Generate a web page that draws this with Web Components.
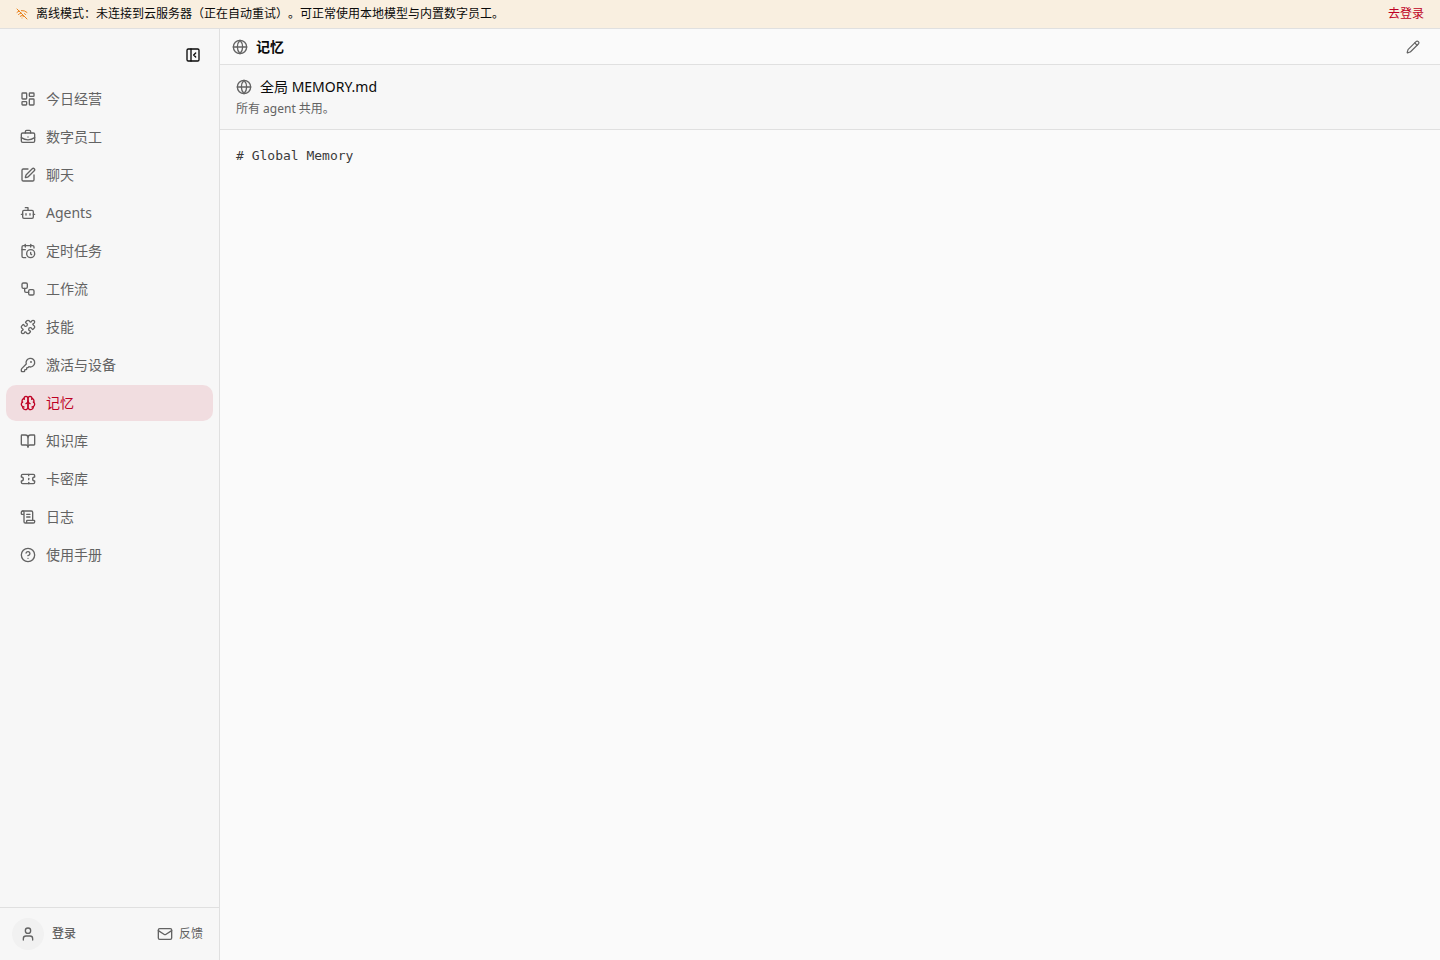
<!DOCTYPE html>
<html lang="zh-CN">
<head>
<meta charset="utf-8">
<meta name="viewport" content="width=device-width, initial-scale=1">
<title>记忆</title>
<style>
    :root {
        --bg: #fafafa;
        --bg-side: #f7f7f7;
        --bg-warn: #f9efe0;
        --border: #e0e0e0;
        --text: #0a0a0a;
        --muted: #636363;
        --accent: #be0024;
        --accent-soft: #f1dde0;
        --warn: #e8811c;
        --mono: "DejaVu Sans Mono", "Noto Sans CJK SC", monospace;
    }

    body {
        margin: 0;
        color: var(--text);
        font: 14px/20px "Noto Sans", "Noto Sans CJK SC", sans-serif;
        text-spacing-trim: space-all;
    }
</style>
</head>
<body>
<app-shell>
    <offline-banner slot="banner" action="去登录">离线模式：未连接到云服务器（正在自动重试）。可正常使用本地模型与内置数字员工。</offline-banner>

    <side-bar slot="sidebar">
        <nav-item icon="dashboard">今日经营</nav-item>
        <nav-item icon="briefcase">数字员工</nav-item>
        <nav-item icon="compose">聊天</nav-item>
        <nav-item icon="bot">Agents</nav-item>
        <nav-item icon="calendar">定时任务</nav-item>
        <nav-item icon="workflow">工作流</nav-item>
        <nav-item icon="puzzle">技能</nav-item>
        <nav-item icon="key">激活与设备</nav-item>
        <nav-item icon="brain" active>记忆</nav-item>
        <nav-item icon="book">知识库</nav-item>
        <nav-item icon="ticket">卡密库</nav-item>
        <nav-item icon="scroll">日志</nav-item>
        <nav-item icon="help">使用手册</nav-item>
        <user-bar slot="footer"></user-bar>
    </side-bar>

    <memory-page>
        <span slot="heading">记忆</span>
        <span slot="file">全局 MEMORY.md</span>
        <span slot="note">所有 agent 共用。</span>
        # Global Memory
    </memory-page>
</app-shell>

<script>
const ICONS = {
    dashboard: `<rect width="7" height="9" x="3" y="3" rx="1"/><rect width="7" height="5" x="14" y="3" rx="1"/><rect width="7" height="9" x="14" y="12" rx="1"/><rect width="7" height="5" x="3" y="16" rx="1"/>`,
    briefcase: `<path d="M12 12h.01"/><path d="M16 6V4a2 2 0 0 0-2-2h-4a2 2 0 0 0-2 2v2"/><path d="M22 13a18.15 18.15 0 0 1-20 0"/><rect width="20" height="14" x="2" y="6" rx="2"/>`,
    compose: `<path d="M12 3H5a2 2 0 0 0-2 2v14a2 2 0 0 0 2 2h14a2 2 0 0 0 2-2v-7"/><path d="M18.375 2.625a1 1 0 0 1 3 3l-9.013 9.014a2 2 0 0 1-.853.505l-2.873.84a.5.5 0 0 1-.62-.62l.84-2.873a2 2 0 0 1 .506-.852z"/>`,
    bot: `<path d="M12 8V4H8"/><rect width="16" height="12" x="4" y="8" rx="2"/><path d="M2 14h2"/><path d="M20 14h2"/><path d="M15 13v2"/><path d="M9 13v2"/>`,
    calendar: `<path d="M21 7.5V6a2 2 0 0 0-2-2H5a2 2 0 0 0-2 2v14a2 2 0 0 0 2 2h3.5"/><path d="M16 2v4"/><path d="M8 2v4"/><path d="M3 10h5"/><path d="M17.5 17.5 16 16.3V14"/><circle cx="16" cy="16" r="6"/>`,
    workflow: `<rect width="8" height="8" x="3" y="3" rx="2"/><path d="M7 11v4a2 2 0 0 0 2 2h4"/><rect width="8" height="8" x="13" y="13" rx="2"/>`,
    puzzle: `<path d="M15.39 4.39a1 1 0 0 0 1.68-.474 2.5 2.5 0 1 1 3.014 3.015 1 1 0 0 0-.474 1.68l1.683 1.682a2.414 2.414 0 0 1 0 3.414L19.61 15.39a1 1 0 0 1-1.68-.474 2.5 2.5 0 1 0-3.014 3.015 1 1 0 0 1 .474 1.68l-1.683 1.682a2.414 2.414 0 0 1-3.414 0L8.61 19.61a1 1 0 0 0-1.68.474 2.5 2.5 0 1 1-3.014-3.015 1 1 0 0 0 .474-1.68l-1.683-1.682a2.414 2.414 0 0 1 0-3.414L4.39 8.61a1 1 0 0 1 1.68.474 2.5 2.5 0 1 0 3.014-3.015 1 1 0 0 1-.474-1.68l1.683-1.682a2.414 2.414 0 0 1 3.414 0z"/>`,
    key: `<path d="M2.586 17.414A2 2 0 0 0 2 18.828V21a1 1 0 0 0 1 1h3a1 1 0 0 0 1-1v-1a1 1 0 0 1 1-1h1a1 1 0 0 0 1-1v-1a1 1 0 0 1 1-1h.172a2 2 0 0 0 1.414-.586l.814-.814a6.5 6.5 0 1 0-4-4z"/><circle cx="16.5" cy="7.5" r=".5" fill="currentColor"/>`,
    brain: `<path d="M12 5a3 3 0 1 0-5.997.125 4 4 0 0 0-2.526 5.77 4 4 0 0 0 .556 6.588A4 4 0 1 0 12 18Z"/><path d="M12 5a3 3 0 1 1 5.997.125 4 4 0 0 1 2.526 5.77 4 4 0 0 1-.556 6.588A4 4 0 1 1 12 18Z"/><path d="M15 13a4.5 4.5 0 0 1-3-4 4.5 4.5 0 0 1-3 4"/><path d="M17.599 6.5a3 3 0 0 0 .399-1.375"/><path d="M6.003 5.125A3 3 0 0 0 6.401 6.5"/><path d="M3.477 10.896a4 4 0 0 1 .585-.396"/><path d="M19.938 10.5a4 4 0 0 1 .585.396"/><path d="M6 18a4 4 0 0 1-1.967-.516"/><path d="M19.967 17.484A4 4 0 0 1 18 18"/>`,
    book: `<path d="M12 7v14"/><path d="M3 18a1 1 0 0 1-1-1V4a1 1 0 0 1 1-1h5a4 4 0 0 1 4 4 4 4 0 0 1 4-4h5a1 1 0 0 1 1 1v13a1 1 0 0 1-1 1h-6a3 3 0 0 0-3 3 3 3 0 0 0-3-3z"/>`,
    ticket: `<path d="M2 9a3 3 0 0 1 0 6v2a2 2 0 0 0 2 2h16a2 2 0 0 0 2-2v-2a3 3 0 0 1 0-6V7a2 2 0 0 0-2-2H4a2 2 0 0 0-2 2Z"/><path d="M13 5v2"/><path d="M13 17v2"/><path d="M13 11v2"/>`,
    scroll: `<path d="M15 12h-5"/><path d="M15 8h-5"/><path d="M19 17V5a2 2 0 0 0-2-2H4"/><path d="M8 21h12a2 2 0 0 0 2-2v-1a1 1 0 0 0-1-1H11a1 1 0 0 0-1 1v1a2 2 0 1 1-4 0V5a2 2 0 1 0-4 0v2a1 1 0 0 0 1 1h3"/>`,
    help: `<circle cx="12" cy="12" r="10"/><path d="M9.09 9a3 3 0 0 1 5.83 1c0 2-3 3-3 3"/><path d="M12 17h.01"/>`,
    user: `<path d="M19 21v-2a4 4 0 0 0-4-4H9a4 4 0 0 0-4 4v2"/><circle cx="12" cy="7" r="4"/>`,
    mail: `<rect width="20" height="16" x="2" y="4" rx="2"/><path d="m22 7-8.97 5.7a1.94 1.94 0 0 1-2.06 0L2 7"/>`,
    globe: `<circle cx="12" cy="12" r="10"/><path d="M12 2a14.5 14.5 0 0 0 0 20 14.5 14.5 0 0 0 0-20"/><path d="M2 12h20"/>`,
    pencil: `<path d="M21.174 6.812a1 1 0 0 0-3.986-3.987L3.842 16.174a2 2 0 0 0-.5.83l-1.321 4.352a.5.5 0 0 0 .623.622l4.353-1.32a2 2 0 0 0 .83-.497z"/><path d="m15 5 4 4"/>`,
    offline: `<path d="M12 20h.01"/><path d="M8.5 16.429a5 5 0 0 1 7 0"/><path d="M5 12.859a10 10 0 0 1 5.17-2.69"/><path d="M19 12.859a10 10 0 0 0-2.007-1.523"/><path d="M2 8.82a15 15 0 0 1 4.177-2.643"/><path d="M22 8.82a15 15 0 0 0-11.288-3.764"/><path d="m2 2 20 20"/>`,
    collapse: `<rect width="18" height="18" x="3" y="3" rx="2"/><path d="M9 3v18"/><path d="m16 15-3-3 3-3"/>`
};

class BaseElement extends HTMLElement {
    constructor() {
        super();
        this.attachShadow({mode: "open"});
    }

    static get reset() {
        return /* css */`
            * { box-sizing: border-box; }

            button {
                display: flex;
                align-items: center;
                margin: 0;
                padding: 0;
                border: 0;
                background: none;
                color: inherit;
                font: inherit;
                cursor: pointer;
            }
        `;
    }

    connectedCallback() {
        this.shadowRoot.innerHTML = /* html */`
            <style>${BaseElement.reset}${this.constructor.styles}</style>
            ${this.template()}
        `;
    }
}

class AppIcon extends BaseElement {
    static get styles() {
        return /* css */`
            :host {
                display: block;
                flex: none;
                width: var(--icon-size, 16px);
                height: var(--icon-size, 16px);
            }

            svg {
                display: block;
                width: 100%;
                height: 100%;
            }
        `;
    }

    template() {
        return /* html */`
            <svg viewBox="0 0 24 24" fill="none" stroke="currentColor" stroke-width="2"
                stroke-linecap="round" stroke-linejoin="round" aria-hidden="true">${ICONS[this.getAttribute("name")]}</svg>
        `;
    }
}

class AppShell extends BaseElement {
    static get styles() {
        return /* css */`
            :host {
                display: flex;
                flex-direction: column;
                min-height: 100vh;
                background: var(--bg);
            }

            .columns {
                display: flex;
                flex: 1;
            }
        `;
    }

    template() {
        return /* html */`
            <slot name="banner"></slot>
            <div class="columns">
                <slot name="sidebar"></slot>
                <slot></slot>
            </div>
        `;
    }
}

class OfflineBanner extends BaseElement {
    static get styles() {
        return /* css */`
            :host {
                display: flex;
                align-items: center;
                gap: 8px;
                padding: 6px 16px;
                border-bottom: 1px solid var(--border);
                background: var(--bg-warn);
                font-size: 12px;
                line-height: 16px;
            }

            app-icon {
                --icon-size: 12px;
                color: var(--warn);
            }

            .message { flex: 1; }

            a {
                color: var(--accent);
                text-decoration: none;
            }
        `;
    }

    template() {
        return /* html */`
            <app-icon name="offline"></app-icon>
            <span class="message"><slot></slot></span>
            <a href="#login">${this.getAttribute("action")}</a>
        `;
    }
}

class SideBar extends BaseElement {
    static get styles() {
        return /* css */`
            :host {
                display: flex;
                flex: none;
                flex-direction: column;
                box-sizing: border-box;
                width: 220px;
                border-right: 1px solid var(--border);
                background: var(--bg-side);
            }

            .top {
                display: flex;
                justify-content: flex-end;
                padding: 12px;
            }

            .top button { padding: 6px; }

            nav {
                display: flex;
                flex: 1;
                flex-direction: column;
                gap: 2px;
                padding: 0 6px;
            }
        `;
    }

    template() {
        return /* html */`
            <div class="top">
                <button type="button" aria-label="收起侧边栏"><app-icon name="collapse"></app-icon></button>
            </div>
            <nav><slot></slot></nav>
            <slot name="footer"></slot>
        `;
    }
}

class NavItem extends BaseElement {
    static get styles() {
        return /* css */`
            :host {
                display: block;
                color: var(--muted);
            }

            :host([active]) { color: var(--accent); }

            a {
                display: flex;
                align-items: center;
                gap: 10px;
                padding: 8px 14px;
                border-radius: 10px;
                color: inherit;
                text-decoration: none;
            }

            :host([active]) a { background: var(--accent-soft); }
        `;
    }

    template() {
        const icon = this.getAttribute("icon");
        return /* html */`
            <a href="#${icon}"><app-icon name="${icon}"></app-icon><slot></slot></a>
        `;
    }
}

class UserBar extends BaseElement {
    static get styles() {
        return /* css */`
            :host {
                display: flex;
                align-items: center;
                justify-content: space-between;
                padding: 10px 16px 10px 12px;
                border-top: 1px solid var(--border);
                color: var(--muted);
                font-size: 12px;
                line-height: 16px;
            }

            .login {
                gap: 8px;
                font-weight: 500;
            }

            .feedback { gap: 6px; }

            .avatar {
                display: grid;
                place-items: center;
                width: 32px;
                height: 32px;
                border-radius: 50%;
                background: #f1f1f1;
            }
        `;
    }

    template() {
        return /* html */`
            <button type="button" class="login">
                <span class="avatar"><app-icon name="user"></app-icon></span>登录
            </button>
            <button type="button" class="feedback"><app-icon name="mail"></app-icon>反馈</button>
        `;
    }
}

class MemoryPage extends BaseElement {
    static get styles() {
        return /* css */`
            :host {
                display: block;
                flex: 1;
                min-width: 0;
            }

            header, .title {
                display: flex;
                align-items: center;
                gap: 8px;
            }

            header {
                padding: 0 12px;
                border-bottom: 1px solid var(--border);
            }

            h1, h2, p, pre {
                margin: 0;
                font-size: 14px;
                font-weight: 400;
            }

            h1 {
                flex: 1;
                font-weight: 700;
            }

            header button {
                --icon-size: 14px;
                height: 35px;
                padding: 0 8px;
            }

            app-icon { color: var(--muted); }

            .file {
                display: flex;
                flex-direction: column;
                gap: 4px;
                padding: 12px 16px;
                border-bottom: 1px solid var(--border);
                background: var(--bg-side);
            }

            p {
                color: var(--muted);
                font-size: 12px;
                line-height: 16px;
            }

            pre {
                padding: 16px;
                color: #3a3a3a;
                font-family: var(--mono);
                font-size: 13px;
                white-space: pre-line;
            }
        `;
    }

    connectedCallback() {
        super.connectedCallback();
        // drop the markup's indentation, only the memory text goes in <pre>
        for (const node of [...this.childNodes]) {
            if (node.nodeType !== Node.TEXT_NODE) continue;
            node.data = node.data.trim();
        }
    }

    template() {
        return /* html */`
            <header>
                <app-icon name="globe"></app-icon>
                <h1><slot name="heading"></slot></h1>
                <button type="button" aria-label="编辑"><app-icon name="pencil"></app-icon></button>
            </header>
            <section class="file">
                <div class="title">
                    <app-icon name="globe"></app-icon>
                    <h2><slot name="file"></slot></h2>
                </div>
                <p><slot name="note"></slot></p>
            </section>
            <pre><slot></slot></pre>
        `;
    }
}

customElements.define("app-icon", AppIcon);
customElements.define("app-shell", AppShell);
customElements.define("offline-banner", OfflineBanner);
customElements.define("side-bar", SideBar);
customElements.define("nav-item", NavItem);
customElements.define("user-bar", UserBar);
customElements.define("memory-page", MemoryPage);
</script>
</body>
</html>
